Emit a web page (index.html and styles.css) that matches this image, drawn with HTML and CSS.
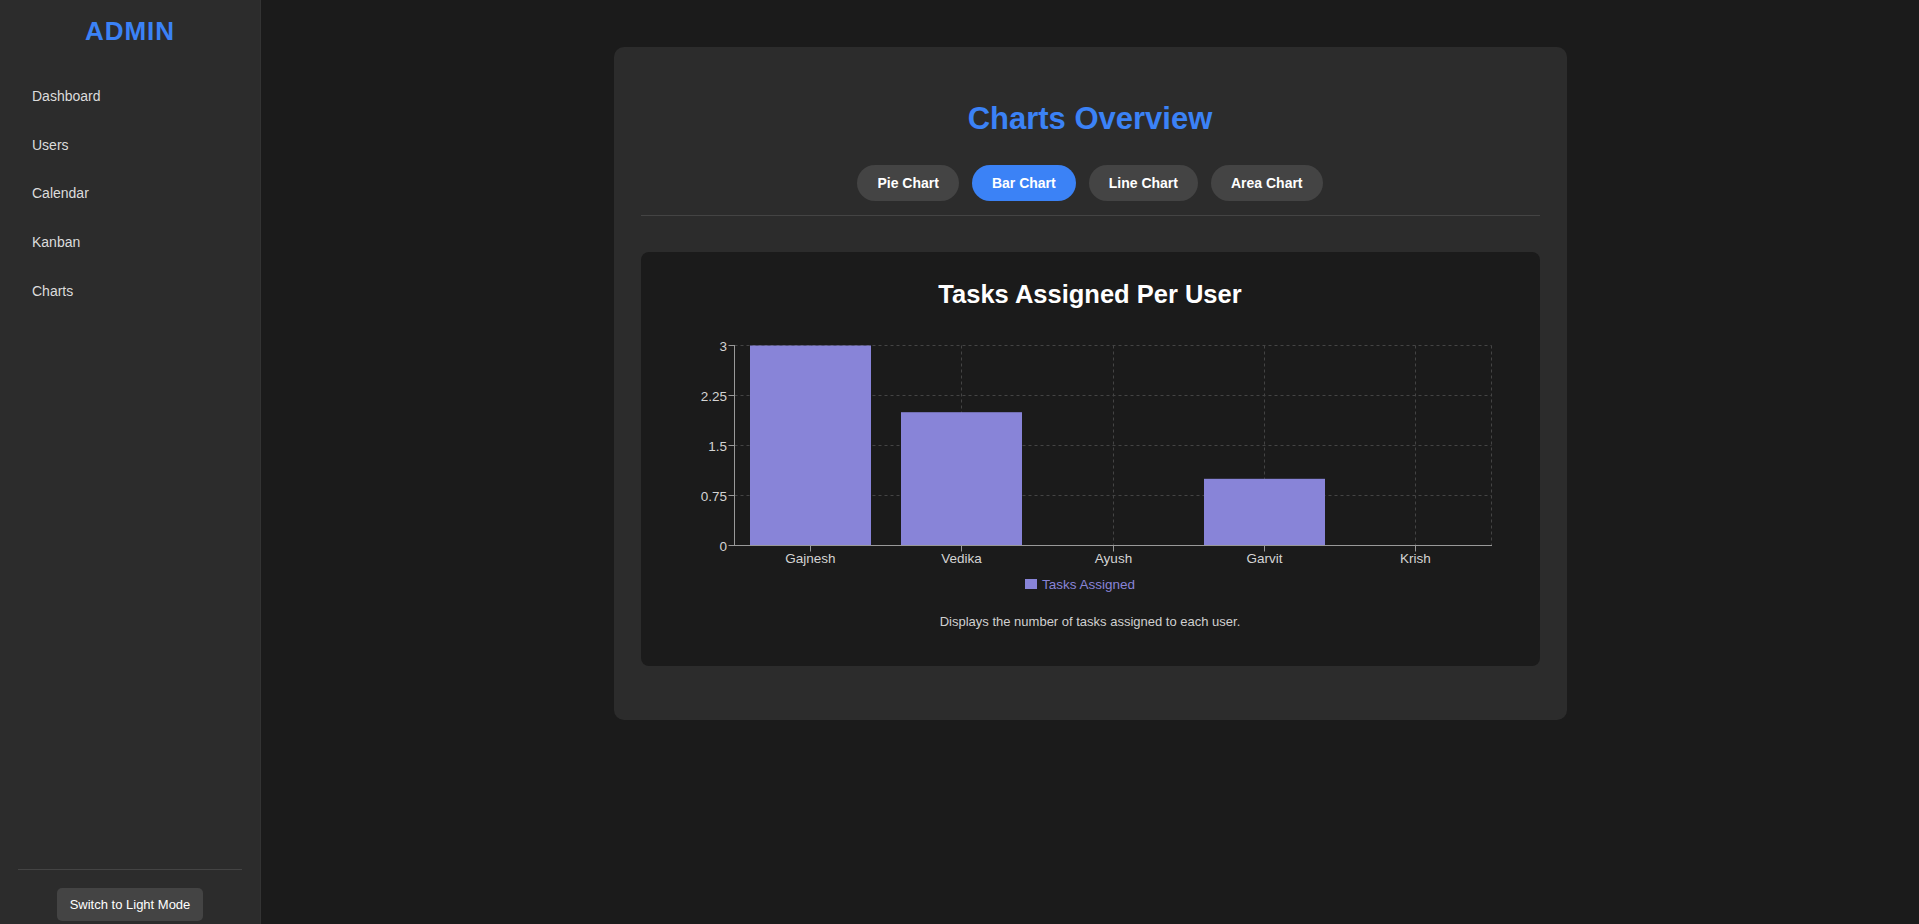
FILE: index.html
```html
<!DOCTYPE html>
<html lang="en">
<head>
<meta charset="utf-8">
<title>Admin - Charts</title>
<link rel="stylesheet" href="styles.css">
</head>
<body>
<aside class="sidebar">
  <h1 class="brand">ADMIN</h1>
  <nav class="nav">
    <a class="nav-link" href="#">Dashboard</a>
    <a class="nav-link" href="#">Users</a>
    <a class="nav-link" href="#">Calendar</a>
    <a class="nav-link" href="#">Kanban</a>
    <a class="nav-link" href="#">Charts</a>
  </nav>
  <div class="sidebar-footer">
    <button class="mode-btn" type="button">Switch to Light Mode</button>
  </div>
</aside>
<main class="main">
  <section class="card">
    <h2 class="card-title">Charts Overview</h2>
    <div class="tabs">
      <button class="tab" type="button">Pie Chart</button>
      <button class="tab active" type="button">Bar Chart</button>
      <button class="tab" type="button">Line Chart</button>
      <button class="tab" type="button">Area Chart</button>
    </div>
    <div class="chart-box">
      <h3 class="chart-title">Tasks Assigned Per User</h3>
      <svg class="chart" width="899" height="262" viewBox="0 0 899 262">
        <g class="grid" stroke="#444" stroke-dasharray="3 3" fill="none">
          <line x1="93.5" y1="36.5" x2="850.5" y2="36.5"/>
          <line x1="93.5" y1="86.5" x2="850.5" y2="86.5"/>
          <line x1="93.5" y1="136.5" x2="850.5" y2="136.5"/>
          <line x1="93.5" y1="186.5" x2="850.5" y2="186.5"/>
          <line x1="169.5" y1="36.5" x2="169.5" y2="236.5"/>
          <line x1="320.5" y1="36.5" x2="320.5" y2="236.5"/>
          <line x1="472.5" y1="36.5" x2="472.5" y2="236.5"/>
          <line x1="623.5" y1="36.5" x2="623.5" y2="236.5"/>
          <line x1="774.5" y1="36.5" x2="774.5" y2="236.5"/>
          <line x1="850.5" y1="36.5" x2="850.5" y2="236.5"/>
        </g>
        <g class="bars" fill="#8884d8">
          <rect x="109" y="36.5" width="121" height="200"/>
          <rect x="260" y="103.2" width="121" height="133.3"/>
          <rect x="563" y="169.8" width="121" height="66.7"/>
        </g>
        <g class="axis" stroke="#999" fill="none">
          <line x1="93.5" y1="36" x2="93.5" y2="237"/>
          <line x1="93" y1="236.5" x2="851" y2="236.5"/>
          <line x1="87.5" y1="36.5" x2="93.5" y2="36.5"/>
          <line x1="87.5" y1="86.5" x2="93.5" y2="86.5"/>
          <line x1="87.5" y1="136.5" x2="93.5" y2="136.5"/>
          <line x1="87.5" y1="186.5" x2="93.5" y2="186.5"/>
          <line x1="87.5" y1="236.5" x2="93.5" y2="236.5"/>
          <line x1="169.5" y1="236.5" x2="169.5" y2="242.5"/>
          <line x1="320.5" y1="236.5" x2="320.5" y2="242.5"/>
          <line x1="472.5" y1="236.5" x2="472.5" y2="242.5"/>
          <line x1="623.5" y1="236.5" x2="623.5" y2="242.5"/>
          <line x1="774.5" y1="236.5" x2="774.5" y2="242.5"/>
        </g>
        <g class="ylabels" text-anchor="end">
          <text x="86" y="41.5">3</text>
          <text x="86" y="91.5">2.25</text>
          <text x="86" y="141.5">1.5</text>
          <text x="86" y="191.5">0.75</text>
          <text x="86" y="241.5">0</text>
        </g>
        <g class="xlabels" text-anchor="middle">
          <text x="169.5" y="254">Gajnesh</text>
          <text x="320.5" y="254">Vedika</text>
          <text x="472.5" y="254">Ayush</text>
          <text x="623.5" y="254">Garvit</text>
          <text x="774.5" y="254">Krish</text>
        </g>
      </svg>
      <div class="legend">
        <span class="legend-swatch"></span>
        <span class="legend-label">Tasks Assigned</span>
      </div>
      <p class="chart-desc">Displays the number of tasks assigned to each user.</p>
    </div>
  </section>
</main>
</body>
</html>
```
FILE: styles.css
```css
* {
  box-sizing: border-box;
}

html, body {
  height: 100%;
}

body {
  margin: 0;
  display: flex;
  background: #1b1b1b;
  color: #e6e6e6;
  font-family: "Liberation Sans", Arial, sans-serif;
  overflow: hidden;
}

.sidebar {
  width: 261px;
  flex: 0 0 261px;
  height: 100vh;
  background: #2c2c2c;
  border-right: 1px solid #333;
  display: flex;
  flex-direction: column;
}

.brand {
  margin: 17px 0 27px;
  font-size: 26px;
  line-height: 28px;
  letter-spacing: 1px;
  font-weight: 700;
  color: #3b82f6;
  text-align: center;
}

.nav {
  flex: 1;
  display: flex;
  flex-direction: column;
}

.nav-link {
  display: block;
  padding: 15px 32px;
  font-size: 14px;
  line-height: 18.7px;
  color: #dcdcdc;
  text-decoration: none;
}

.sidebar-footer {
  margin: 0 18px;
  border-top: 1px solid #444;
  padding: 18px 0 3px;
  display: flex;
  justify-content: center;
}

.mode-btn {
  font-family: "Liberation Sans", Arial, sans-serif;
  font-size: 13px;
  line-height: 15px;
  padding: 9px 13px;
  border: 0;
  border-radius: 5px;
  background: #444;
  color: #fff;
}

.main {
  flex: 1;
  display: flex;
  justify-content: center;
  align-items: flex-start;
  padding-top: 47px;
}

.card {
  width: 953px;
  padding: 27px;
  background: #2c2c2c;
  border-radius: 10px;
}

.card-title {
  margin: 26px 0 0;
  font-size: 31px;
  line-height: 38px;
  font-weight: 700;
  color: #3b82f6;
  text-align: center;
}

.tabs {
  margin-top: 27px;
  display: flex;
  justify-content: center;
  gap: 13px;
  padding-bottom: 14px;
  border-bottom: 1px solid #444;
}

.tab {
  font-family: "Liberation Sans", Arial, sans-serif;
  font-size: 14px;
  line-height: 16px;
  font-weight: 700;
  padding: 10px 20px;
  border: 0;
  border-radius: 20px;
  background: #444;
  color: #fff;
}

.tab.active {
  background: #3b82f6;
}

.chart-box {
  margin: 36px 0 27px;
  background: #1b1b1b;
  border-radius: 8px;
  padding: 27px 0 34px;
  text-align: center;
}

.chart-title {
  margin: 0;
  font-size: 25.5px;
  line-height: 30px;
  font-weight: 700;
  color: #fff;
}

.chart {
  display: block;
}

.chart text {
  font-family: "Liberation Sans", Arial, sans-serif;
  font-size: 13.5px;
  fill: #d4d4d4;
}

.legend {
  margin-top: 3px;
  display: flex;
  justify-content: center;
  align-items: center;
  gap: 5px;
  padding-right: 20px;
  height: 20px;
}

.legend-swatch {
  width: 12px;
  height: 10px;
  background: #8884d8;
}

.legend-label {
  font-size: 13.5px;
  color: #8884d8;
}

.chart-desc {
  margin: 18px 0 0;
  font-size: 13px;
  line-height: 20px;
  color: #d0d0d0;
}
```
